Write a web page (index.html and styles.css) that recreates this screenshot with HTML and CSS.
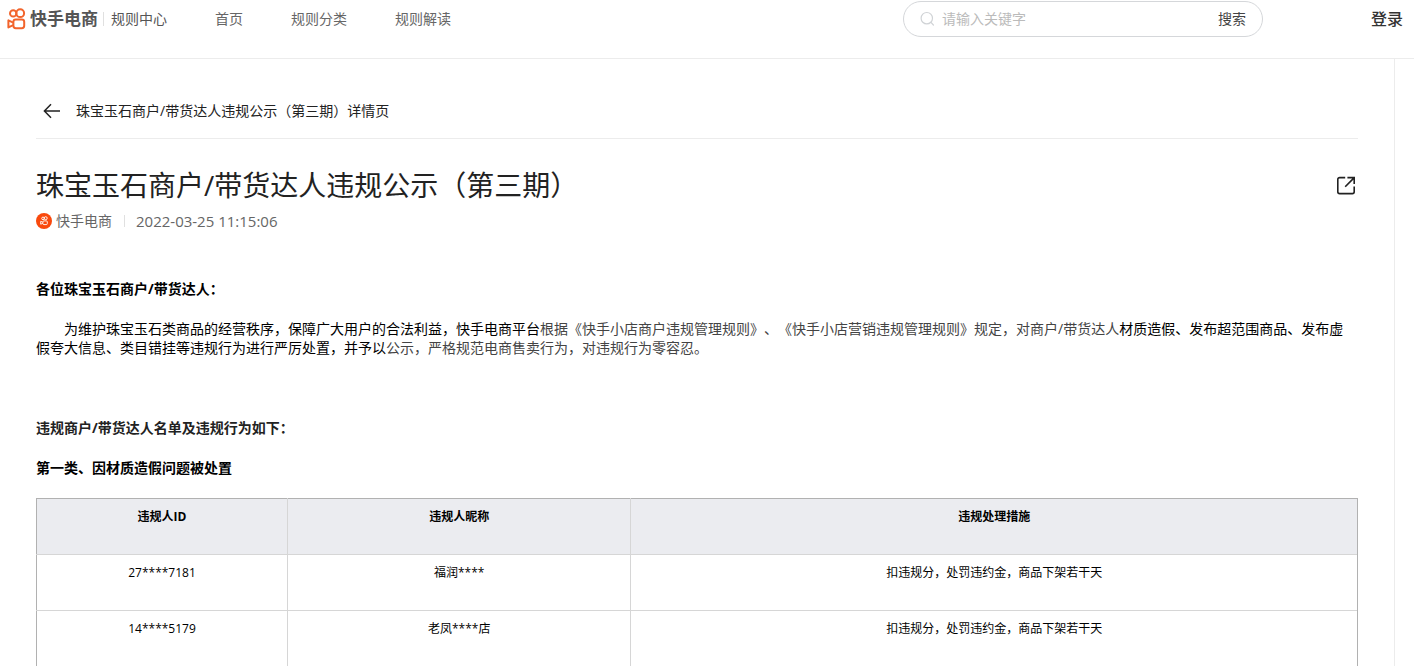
FILE: index.html
```html
<!DOCTYPE html>
<html lang="zh-CN">
<head>
<meta charset="utf-8">
<meta name="viewport" content="width=device-width, initial-scale=1">
<title>珠宝玉石商户/带货达人违规公示（第三期）</title>
<link rel="stylesheet" href="styles.css">
</head>
<body>
<header class="topbar">
  <a class="brand" href="#">
    <svg class="brand-mark" viewBox="0 0 20 22" width="20" height="22" fill="none" stroke="#f2642c" stroke-width="2" stroke-linejoin="round" aria-hidden="true">
      <circle cx="7.2" cy="5.4" r="3.2"/>
      <circle cx="14.2" cy="5.2" r="3.9"/>
      <rect x="7.4" y="11.4" width="10.8" height="8.8" rx="2.4"/>
      <path d="M7.2 14.6 2.4 12.4v7l4.8-2.2"/>
    </svg>
    <span class="brand-name">快手电商</span>
    <span class="brand-sub">规则中心</span>
  </a>
  <nav class="nav">
    <a href="#">首页</a>
    <a href="#">规则分类</a>
    <a href="#">规则解读</a>
  </nav>
  <form class="search" role="search">
    <svg viewBox="0 0 16 16" width="16" height="16" fill="none" stroke="#d0d3d6" stroke-width="1.2" stroke-linecap="round" aria-hidden="true">
      <circle cx="6.8" cy="7.2" r="5.7"/>
      <path d="m11 11.4 2.4 2.6"/>
    </svg>
    <input class="search-input" type="text" placeholder="请输入关键字" aria-label="请输入关键字">
    <button class="search-button" type="button">搜索</button>
  </form>
  <a class="login" href="#">登录</a>
</header>

<main class="page">
  <div class="crumb">
    <button class="back" type="button" aria-label="返回">
      <svg viewBox="0 0 18 16" width="18" height="16" fill="none" stroke="#222" stroke-width="1.5" aria-hidden="true">
        <path d="M8 1.2 1.4 8 8 14.8M1.6 8H17"/>
      </svg>
    </button>
    <span>珠宝玉石商户/带货达人违规公示（第三期）详情页</span>
  </div>

  <article>
    <div class="title-row">
      <h1>珠宝玉石商户/带货达人违规公示（第三期）</h1>
      <button class="share" type="button" aria-label="打开">
        <svg viewBox="0 0 20 20" width="20" height="20" fill="none" stroke="#222" stroke-width="1.6" aria-hidden="true">
          <path d="M9.2 2.6H3.6a1.8 1.8 0 0 0-1.8 1.8v12.4a1.8 1.8 0 0 0 1.8 1.8h12.8a1.8 1.8 0 0 0 1.8-1.8v-5.4"/>
          <path d="M11.4 2.6h6.8v6.4M18 2.9l-8.8 8.9"/>
        </svg>
      </button>
    </div>
    <div class="meta">
      <svg viewBox="0 0 16 16" width="16" height="16" aria-hidden="true">
        <circle cx="8" cy="8" r="8" fill="#f9490d"/>
        <g fill="none" stroke="#fff" stroke-width=".9" stroke-linejoin="round">
          <circle cx="7" cy="5.4" r="1.3"/>
          <circle cx="9.7" cy="5.2" r="1.5"/>
          <rect x="6.9" y="7.9" width="4.4" height="3.7" rx="1"/>
          <path d="M6.8 9.2 4.7 8.3v2.9l2.1-.9"/>
        </g>
      </svg>
      <span class="author">快手电商</span>
      <time datetime="2022-03-25T11:15:06">2022-03-25 11:15:06</time>
    </div>

    <div class="content">
      <p><strong>各位珠宝玉石商户/带货达人：</strong></p>
      <p class="lead">为维护珠宝玉石类商品的经营秩序，保障广大用户的合法利益，快手电商平台<span class="soft">根据《快手小店商户违规管理规则》、《快手小店营销违规管理规则》规定，对商户/带货达人</span>材质造假、发布超范围商品、发布虚假夸大信息、类目错挂等违规行为进行严厉处置，并予以<span class="soft">公示，严格规范电商售卖行为，对违规行为零容忍。</span></p>
      <h2 class="list-title">违规商户/带货达人名单及违规行为如下：</h2>
      <h3>第一类、因材质造假问题被处置</h3>
      <table>
        <colgroup><col class="col-id"><col class="col-name"><col></colgroup>
        <thead>
          <tr><th scope="col">违规人ID</th><th scope="col">违规人昵称</th><th scope="col">违规处理措施</th></tr>
        </thead>
        <tbody>
          <tr><td>27****7181</td><td>福润****</td><td>扣违规分，处罚违约金，商品下架若干天</td></tr>
          <tr><td>14****5179</td><td>老凤****店</td><td>扣违规分，处罚违约金，商品下架若干天</td></tr>
        </tbody>
      </table>
    </div>
  </article>
</main>
</body>
</html>
```

FILE: styles.css
```css
* { box-sizing: border-box; }

body {
  margin: 0;
  background: #fff;
  color: #000;
  font: 14px/20px "Open Sans", "Noto Sans CJK SC", sans-serif;
  text-spacing-trim: space-all;
}

a { color: inherit; text-decoration: none; }

button {
  padding: 0;
  border: 0;
  background: none;
  color: inherit;
  font: inherit;
  cursor: pointer;
}

svg { display: block; flex: none; }

.topbar {
  display: flex;
  align-items: center;
  padding: 0 11px 20px 6px;
  border-bottom: 1px solid #ececec;
}

.brand { display: flex; align-items: center; color: #555; }
.brand-name { margin-left: 4px; font-size: 17px; font-weight: 700; }
.brand-sub {
  margin-left: 5px;
  padding-left: 7px;
  border-left: 1px solid #e0e0e0;
  font-weight: 400;
  line-height: 14px;
}

.nav {
  display: flex;
  gap: 48px;
  margin-left: 48px;
  color: #666;
}

.search {
  display: flex;
  align-items: center;
  gap: 6px;
  width: 360px;
  height: 36px;
  margin: 1px 108px 1px auto;
  padding: 0 16px;
  border: 1px solid #d5d7da;
  border-radius: 18px;
}
.search-input {
  flex: 1;
  min-width: 0;
  padding: 0;
  border: 0;
  outline: 0;
  background: none;
  color: #333;
  font: inherit;
}
.search-input::placeholder { color: #bbb; opacity: 1; }
.search-button { color: #444; }

.login { color: #333; font-size: 16px; font-weight: 500; }

.page {
  margin-right: 19px;
  padding: 42px 36px 0;
  border-right: 1px solid #ececec;
}

.crumb {
  display: flex;
  align-items: center;
  gap: 15px;
  padding: 0 7px 17px;
  border-bottom: 1px solid #ececec;
  color: #222;
}

.title-row {
  display: flex;
  align-items: center;
  justify-content: space-between;
  padding: 26px 2px 0 0;
}
h1 {
  margin: 0;
  color: #222;
  font-size: 28px;
  font-weight: 400;
  line-height: 40px;
}

.meta { display: flex; align-items: center; margin-top: 6px; color: #666; }
.author { margin-left: 4px; }
.meta time {
  margin-left: 12px;
  padding-left: 11px;
  border-left: 1px solid #e0e0e0;
  font-size: 15px;
  line-height: 12px;
}

.content { padding-top: 48px; }
.content p,
.content h2,
.content h3 {
  margin: 0 0 20px;
  font-size: 14px;
  line-height: 20px;
}
.content .lead {
  margin-bottom: 61px;
  padding-right: 8px;
  line-height: 19px;
  text-indent: 2em;
}
.content .list-title { color: #222; }
.soft { color: #444; }

table {
  width: 100%;
  border: 1px solid #b1b1b1;
  border-bottom: 0;
  border-collapse: collapse;
  table-layout: fixed;
  font-size: 12px;
  line-height: 18px;
  text-align: center;
}
.col-id { width: 19%; }
.col-name { width: 26%; }
th, td {
  height: 56px;
  padding: 9px 8px;
  border-right: 1px solid #d6d6d6;
  vertical-align: top;
}
tbody td { border-top: 1px solid #d6d6d6; }
th { background: #ebecf0; }
th:last-child, td:last-child { border-right-color: #b1b1b1; }
```
